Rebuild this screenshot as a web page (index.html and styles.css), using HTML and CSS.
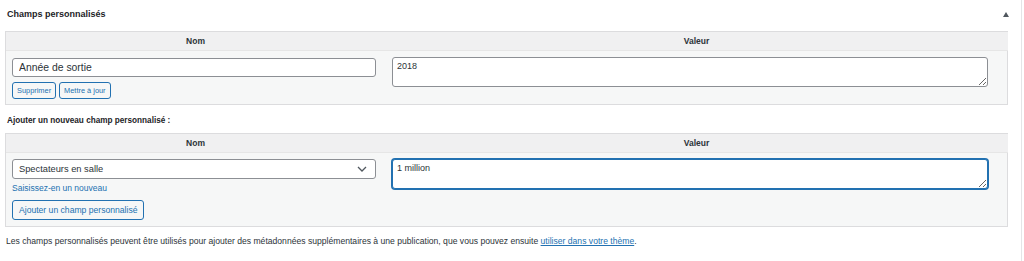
FILE: index.html
```html
<!DOCTYPE html>
<html lang="fr">
<head>
<meta charset="utf-8">
<title>Champs personnalisés</title>
<link rel="stylesheet" href="styles.css">
</head>
<body>
<div class="metabox">
  <div class="head">
    <h2 class="title">Champs personnalisés</h2>
    <span class="toggle" aria-hidden="true"></span>
  </div>
  <div class="inside">
    <div class="cf-table">
      <div class="th">Nom</div>
      <div class="th">Valeur</div>
      <div class="td td-name">
        <input class="text-input" type="text" value="Année de sortie">
        <div class="btns">
          <button class="btn btn-sm">Supprimer</button>
          <button class="btn btn-sm">Mettre à jour</button>
        </div>
      </div>
      <div class="td td-value">
        <textarea class="area">2018</textarea>
      </div>
    </div>

    <p class="subhead">Ajouter un nouveau champ personnalisé :</p>

    <div class="cf-table">
      <div class="th">Nom</div>
      <div class="th">Valeur</div>
      <div class="td td-name td-new">
        <div class="select">
          <span>Spectateurs en salle</span>
          <svg class="chev" width="10" height="6" viewBox="0 0 10 6"><path d="M1 1l4 4 4-4" fill="none" stroke="#50575e" stroke-width="1.3"/></svg>
        </div>
        <a class="link" href="#">Saisissez-en un nouveau</a>
        <button class="btn btn-add">Ajouter un champ personnalisé</button>
      </div>
      <div class="td td-value td-new">
        <textarea class="area area-focus">1 million</textarea>
      </div>
    </div>

    <p class="note">Les champs personnalisés peuvent être utilisés pour ajouter des métadonnées supplémentaires à une publication, que vous pouvez ensuite <a href="#" class="ulink">utiliser dans votre thème</a>.</p>
  </div>
</div>
</body>
</html>
```

FILE: styles.css
```css
* { box-sizing: border-box; }
html, body { margin: 0; padding: 0; background: #fff; }
body {
  font-family: "Liberation Sans", Arial, sans-serif;
  color: #1d2327;
  font-size: 10px;
}
.metabox {
  width: 1022px;
  height: 261px;
  border-right: 1px solid #e4e5e7;
}
.head {
  height: 28px;
  display: flex;
  align-items: center;
  justify-content: space-between;
  padding: 0 12px 0 7px;
}
.title {
  margin: 0;
  font-size: 9px;
  font-weight: bold;
  color: #1d2327;
}
.toggle {
  width: 0;
  height: 0;
  border-left: 3px solid transparent;
  border-right: 3px solid transparent;
  border-bottom: 5px solid #50575e;
}
.inside {
  padding: 3px 13px 0 5px;
}
.cf-table {
  display: grid;
  grid-template-columns: 379px 1fr;
  border: 1px solid #dcdcde;
  background: #f6f7f7;
}
.th {
  height: 19px;
  background: #f0f0f1;
  border-bottom: 1px solid #e6e6e6;
  font-size: 8.5px;
  font-weight: bold;
  color: #2c3338;
  display: flex;
  align-items: center;
  justify-content: center;
}
.td-name {
  padding: 7px 9px 5px 6px;
}
.td-value {
  padding: 6px 20px 6px 7px;
}
.text-input {
  display: block;
  width: 364px;
  height: 19px;
  border: 1px solid #8c8f94;
  border-radius: 3px;
  background: #fff;
  font-family: inherit;
  font-size: 10.4px;
  color: #2c3338;
  padding: 0 6px;
}
.btns {
  display: flex;
  gap: 3px;
  margin-top: 5px;
}
.btn {
  font-family: inherit;
  color: #2271b1;
  background: #f6f7f7;
  border: 1px solid #2271b1;
  border-radius: 3px;
  cursor: pointer;
}
.btn-sm {
  height: 17px;
  font-size: 7.4px;
  padding: 0 4px;
}
.area {
  display: block;
  width: 596px;
  height: 30px;
  border: 1px solid #8c8f94;
  border-radius: 3px;
  background: #fff;
  font-family: inherit;
  font-size: 9px;
  color: #2c3338;
  padding: 3px 4px;
  resize: vertical;
}
.area-focus {
  border: 1px solid #2271b1;
  box-shadow: 0 0 0 1px #2271b1;
}
.subhead {
  margin: 11px 0 0 2px;
  height: 17px;
  font-size: 8.2px;
  font-weight: bold;
  color: #1d2327;
}
.td-new.td-name {
  padding: 6px 9px 6px 6px;
}
.td-new.td-value {
  padding: 6px 20px 6px 7px;
}
.select {
  width: 364px;
  height: 20px;
  border: 1px solid #8c8f94;
  border-radius: 3px;
  background: #fff;
  display: flex;
  align-items: center;
  justify-content: space-between;
  padding: 0 8px 0 6px;
  font-size: 9.3px;
  color: #2c3338;
}
.link {
  display: block;
  margin-top: 4px;
  font-size: 8.5px;
  color: #2271b1;
  text-decoration: none;
  line-height: 11px;
}
.btn-add {
  display: block;
  margin-top: 6px;
  height: 20px;
  font-size: 8.6px;
  padding: 0 6px;
}
.note {
  margin: 9px 0 0 1px;
  font-size: 8.6px;
  color: #2c3338;
}
.ulink {
  color: #2271b1;
  text-decoration: underline;
}
```
